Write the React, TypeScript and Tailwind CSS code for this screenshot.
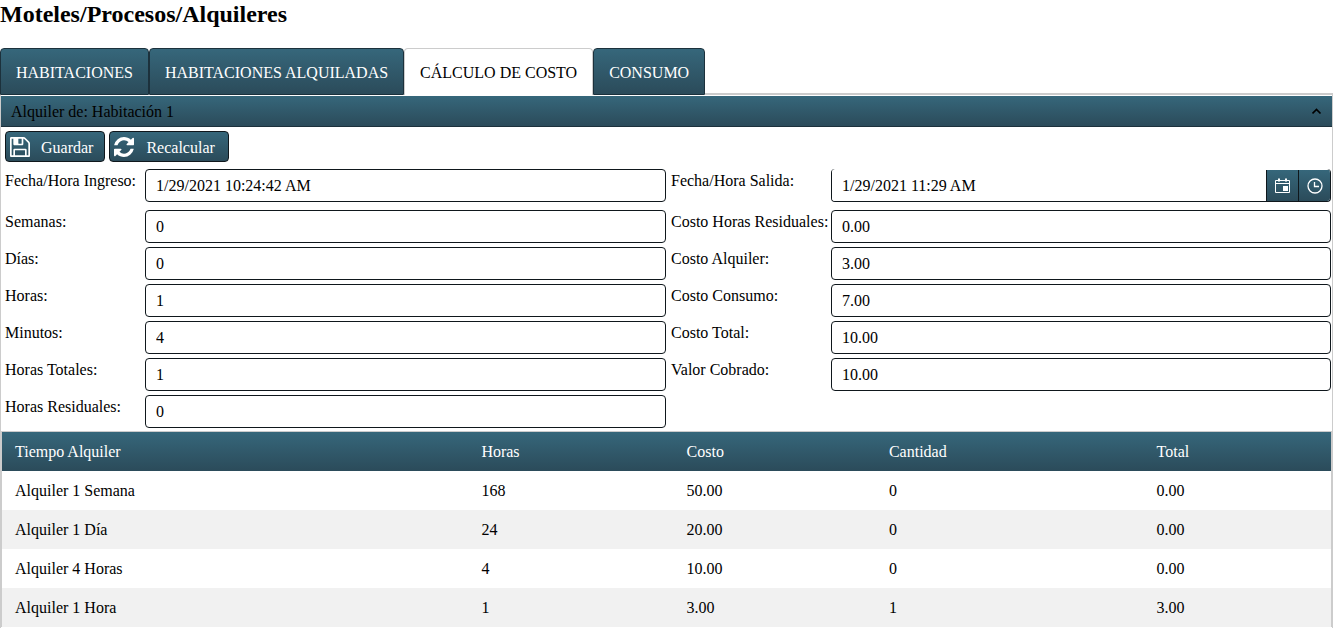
import { useState } from "react";

interface Tab {
  label: string;
  active?: boolean;
}

interface Field {
  id: string;
  label: string;
  value: string;
}

interface Rate {
  name: string;
  hours: number;
  cost: string;
  quantity: number;
  total: string;
}

const TABS: Tab[] = [
  { label: "HABITACIONES" },
  { label: "HABITACIONES ALQUILADAS" },
  { label: "CÁLCULO DE COSTO", active: true },
  { label: "CONSUMO" },
];

// Pairs are laid out side by side, left column then right column
const FIELD_ROWS: Field[][] = [
  [
    { id: "semanas", label: "Semanas:", value: "0" },
    { id: "costoResiduales", label: "Costo Horas Residuales:", value: "0.00" },
  ],
  [
    { id: "dias", label: "Días:", value: "0" },
    { id: "costoAlquiler", label: "Costo Alquiler:", value: "3.00" },
  ],
  [
    { id: "horas", label: "Horas:", value: "1" },
    { id: "costoConsumo", label: "Costo Consumo:", value: "7.00" },
  ],
  [
    { id: "minutos", label: "Minutos:", value: "4" },
    { id: "costoTotal", label: "Costo Total:", value: "10.00" },
  ],
  [
    { id: "horasTotales", label: "Horas Totales:", value: "1" },
    { id: "valorCobrado", label: "Valor Cobrado:", value: "10.00" },
  ],
  [{ id: "horasResiduales", label: "Horas Residuales:", value: "0" }],
];

const RATES: Rate[] = [
  { name: "Alquiler 1 Semana", hours: 168, cost: "50.00", quantity: 0, total: "0.00" },
  { name: "Alquiler 1 Día", hours: 24, cost: "20.00", quantity: 0, total: "0.00" },
  { name: "Alquiler 4 Horas", hours: 4, cost: "10.00", quantity: 0, total: "0.00" },
  { name: "Alquiler 1 Hora", hours: 1, cost: "3.00", quantity: 1, total: "3.00" },
];

function SaveIcon() {
  return (
    <svg viewBox="128 128 1536 1536" className="h-5 w-5" fill="currentColor" aria-hidden="true">
      <path d="M512 1536h768v-384h-768v384zm896 0h128v-896q0-14-10-38.500t-20-34.500l-281-281q-10-10-34-20t-39-10v416q0 40-28 68t-68 28h-576q-40 0-68-28t-28-68v-416h-128v1280h128v-416q0-40 28-68t68-28h832q40 0 68 28t28 68v416zm-384-928v-320q0-13-9.500-22.500t-22.500-9.500h-192q-13 0-22.500 9.500t-9.500 22.500v320q0 13 9.500 22.500t22.500 9.500h192q13 0 22.500-9.500t9.500-22.500zm640 32v928q0 40-28 68t-68 28h-1344q-40 0-68-28t-28-68v-1344q0-40 28-68t68-28h928q40 0 88 20t76 48l280 280q28 28 48 76t20 88z" />
    </svg>
  );
}

function RefreshIcon() {
  return (
    <svg viewBox="0 0 1536 1536" className="h-5 w-5" fill="currentColor" aria-hidden="true">
      <path d="M1511 928q0 5-1 7-64 268-268 434.500T764 1536q-146 0-282.500-55T238 1324l-129 129q-19 19-45 19t-45-19-19-45V960q0-26 19-45t45-19h448q26 0 45 19t19 45-19 45l-137 137q71 66 161 102t187 36q134 0 250-65t186-179q11-17 53-117 8-23 30-23h192q13 0 22.500 9.500t9.500 22.500zm25-800v448q0 26-19 45t-45 19h-448q-26 0-45-19t-19-45 19-45l138-138Q969 256 768 256q-134 0-250 65T332 500q-11 17-53 117-8 23-30 23H50q-13 0-22.500-9.500T18 608v-7q65-268 270-434.500T768 0q146 0 284 55.500T1297 212l130-129q19-19 45-19t45 19 19 45z" />
    </svg>
  );
}

function CalendarIcon() {
  return (
    <svg viewBox="0 0 16 16" className="h-4 w-4" fill="none" stroke="currentColor" aria-hidden="true">
      <path d="M.5 2.500h14v12H.5zM.5 5.500h14" />
      <path d="M4 .5v3M11 .5v3" strokeWidth="2" />
      <path d="M8 8h5v5H8z" fill="currentColor" stroke="none" />
    </svg>
  );
}

function ClockIcon() {
  return (
    <svg viewBox="0 0 16 16" className="h-4 w-4" fill="none" stroke="currentColor" aria-hidden="true">
      <circle cx="8" cy="8" r="7" strokeWidth="1.300" />
      <path d="M7.500 4v4.500H12" strokeWidth="1.300" />
    </svg>
  );
}

function TextField({ field }: { field: Field }) {
  return (
    <>
      <label htmlFor={field.id} className="whitespace-nowrap pt-[3px]">
        {field.label}
      </label>
      <input
        id={field.id}
        type="text"
        defaultValue={field.value}
        className="h-[33px] w-full min-w-0 rounded border border-[#0f171c] bg-white px-2.5"
      />
    </>
  );
}

export default function App() {
  const [open, setOpen] = useState(true);

  return (
    <main className="bg-white font-['Liberation_Serif',serif] text-base leading-[18px] text-black">
      <h2 className="mb-5 text-2xl leading-7 font-bold">Moteles/Procesos/Alquileres</h2>

      {/* Tabs */}
      <nav className="flex">
        {TABS.map((tab) => (
          <button
            key={tab.label}
            type="button"
            className={
              tab.active
                ? "h-[47px] rounded-t border border-b-0 border-[#cccccc] bg-white px-[15px] pt-0.5"
                : "h-[47px] rounded-t border border-[#1c313c] bg-linear-to-b from-[#36677b] to-[#2b4b5a] px-[15px] pt-0.5 text-white"
            }
          >
            {tab.label}
          </button>
        ))}
        <div className="h-0.5 flex-1 self-end bg-[#cccccc]" />
      </nav>

      {/* Rental panel */}
      <section className="border-x border-[#cccccc] py-px">
        <button
          type="button"
          aria-expanded={open}
          onClick={() => setOpen(!open)}
          className="flex h-[31px] w-full items-center justify-between border-b border-[#1c313c] bg-linear-to-b from-[#36677b] to-[#2b4b5a] px-2.5 pt-0.5"
        >
          <span>Alquiler de: Habitación 1</span>
          <svg viewBox="0 0 10 8" className="h-2 w-2.5" fill="none" stroke="currentColor" strokeWidth="1.700" aria-hidden="true">
            <path d="M.5 5.500L4.500 1.500l4 4" />
          </svg>
        </button>

        {open && (
          <div>
            <div className="flex gap-1 px-1 pt-1">
              <button
                type="button"
                className="flex h-[31px] items-center gap-[11px] rounded border border-[#0f171c] bg-linear-to-b from-[#36677b] to-[#2b4b5a] pr-[11px] pl-1 text-white"
              >
                <SaveIcon />
                <span className="pt-0.5">Guardar</span>
              </button>
              <button
                type="button"
                className="flex h-[31px] items-center gap-3 rounded border border-[#0f171c] bg-linear-to-b from-[#36677b] to-[#2b4b5a] pr-[13px] pl-1 text-white"
              >
                <RefreshIcon />
                <span className="pt-0.5">Recalcular</span>
              </button>
            </div>

            <div className="grid grid-cols-[135px_521fr_155px_500fr] gap-x-[5px] gap-y-1 pt-[7px] pr-px pb-[3px] pl-1">
              <label htmlFor="ingreso" className="whitespace-nowrap pt-[3px]">
                Fecha/Hora Ingreso:
              </label>
              <input
                id="ingreso"
                type="text"
                defaultValue="1/29/2021 10:24:42 AM"
                className="mb-1 h-[33px] w-full min-w-0 rounded border border-[#0f171c] bg-white px-2.5"
              />
              <label htmlFor="salida" className="whitespace-nowrap pt-[3px]">
                Fecha/Hora Salida:
              </label>
              <div className="mb-1 flex h-[33px] overflow-hidden rounded border border-t-0 border-[#0f171c] pt-px">
                <input
                  id="salida"
                  type="text"
                  defaultValue="1/29/2021 11:29 AM"
                  className="min-w-0 flex-1 bg-white px-2.5"
                />
                <button
                  type="button"
                  aria-label="Fecha"
                  className="flex w-8 items-center justify-center border-l border-[#0f171c] bg-linear-to-b from-[#36677b] to-[#2b4b5a] text-white"
                >
                  <CalendarIcon />
                </button>
                <button
                  type="button"
                  aria-label="Hora"
                  className="flex w-8 items-center justify-center border-l border-[#0f171c] bg-linear-to-b from-[#36677b] to-[#2b4b5a] text-white"
                >
                  <ClockIcon />
                </button>
              </div>

              {FIELD_ROWS.flat().map((field) => (
                <TextField key={field.id} field={field} />
              ))}
            </div>

            {/* Rates table */}
            <div className="border-x border-t border-[#cccccc]">
              <table className="w-full border-collapse text-left">
                <thead>
                  <tr className="h-[39px] bg-linear-to-b from-[#36677b] to-[#2b4b5a] text-white">
                    <th className="px-[13px] font-normal">Tiempo Alquiler</th>
                    <th className="px-[13px] font-normal">Horas</th>
                    <th className="px-[13px] font-normal">Costo</th>
                    <th className="px-[13px] font-normal">Cantidad</th>
                    <th className="px-[13px] font-normal">Total</th>
                  </tr>
                </thead>
                <tbody>
                  {RATES.map((rate) => (
                    <tr key={rate.name} className="h-[39px] even:bg-[#f1f1f1]">
                      <td className="px-[13px]">{rate.name}</td>
                      <td className="px-[13px]">{rate.hours}</td>
                      <td className="px-[13px]">{rate.cost}</td>
                      <td className="px-[13px]">{rate.quantity}</td>
                      <td className="px-[13px]">{rate.total}</td>
                    </tr>
                  ))}
                </tbody>
              </table>
            </div>
          </div>
        )}
      </section>
    </main>
  );
}
